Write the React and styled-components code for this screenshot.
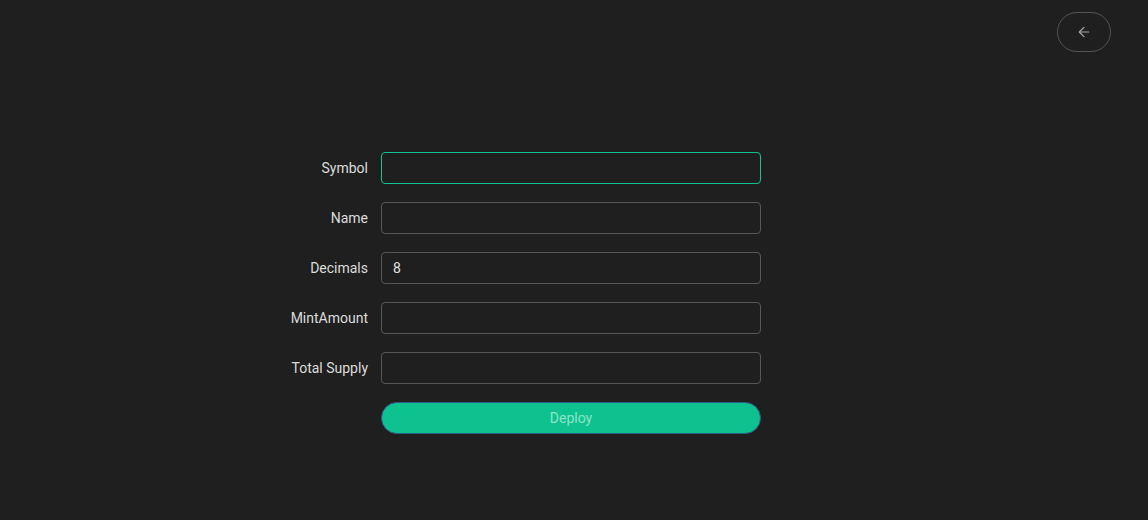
import styled, { createGlobalStyle } from "styled-components";
import { ArrowLeft } from "lucide-react";

const GlobalStyle = createGlobalStyle`
  html, body {
    margin: 0;
    padding: 0;
    background: #1f1f1f;
  }
  body {
    font-family: Roboto, "Liberation Sans", sans-serif;
  }
`;

const Page = styled.div`
  width: 100vw;
  height: 100vh;
  background: #1f1f1f;
  display: flex;
  flex-direction: column;
`;

const Header = styled.header`
  height: 64px;
  flex: none;
  display: flex;
  justify-content: flex-end;
  align-items: flex-start;
  padding: 12px 37px 0 0;
  box-sizing: border-box;
`;

const BackButton = styled.button`
  width: 54px;
  height: 40px;
  border-radius: 20px;
  border: 1px solid #545454;
  background: transparent;
  color: #a8a8a8;
  display: flex;
  align-items: center;
  justify-content: center;
  cursor: pointer;
  padding: 0;
`;

const Main = styled.main`
  flex: 1;
  display: flex;
  align-items: center;
  padding-top: 2px;
`;

const Form = styled.form`
  width: 100%;
  display: grid;
  grid-template-columns: 1fr 380px 387px;
  row-gap: 18px;
  align-items: center;
`;

const Label = styled.label`
  grid-column: 1;
  text-align: right;
  padding-right: 13px;
  font-size: 14px;
  color: #dcdcdc;
`;

const Input = styled.input`
  grid-column: 2;
  height: 32px;
  box-sizing: border-box;
  background: transparent;
  border: 1px solid ${(p) => (p.$active ? "#12c48f" : "#575757")};
  border-radius: 4px;
  padding: 0 11px;
  font-family: inherit;
  font-size: 14px;
  color: #e0e0e0;
  outline: none;
`;

const Deploy = styled.button`
  grid-column: 2;
  height: 32px;
  border-radius: 16px;
  border: 1px solid #2f5a88;
  background: #0dc28f;
  color: #8ee2c6;
  font-family: inherit;
  font-size: 14px;
  cursor: pointer;
`;

const fields = [
  { label: "Symbol", value: "", active: true },
  { label: "Name", value: "" },
  { label: "Decimals", value: "8" },
  { label: "MintAmount", value: "" },
  { label: "Total Supply", value: "" },
];

const App = () => {
  return (
    <Page>
      <GlobalStyle />
      <Header>
        <BackButton>
          <ArrowLeft size={16} strokeWidth={1.8} />
        </BackButton>
      </Header>
      <Main>
        <Form onSubmit={(e) => e.preventDefault()}>
          {fields.map((f) => (
            <>
              <Label key={f.label + "l"}>{f.label}</Label>
              <Input key={f.label} defaultValue={f.value} $active={f.active} />
            </>
          ))}
          <Deploy>Deploy</Deploy>
        </Form>
      </Main>
    </Page>
  );
};

export default App;
